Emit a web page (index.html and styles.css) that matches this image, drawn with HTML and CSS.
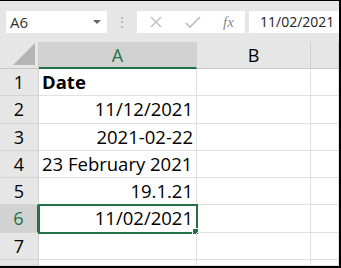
FILE: index.html
```html
<!DOCTYPE html>
<html lang="en">

<head>
    <meta charset="UTF-8">
    <title>Excel dates</title>
    <link rel="stylesheet" href="styles.css">
</head>

<body>
    <div class="window">
        <div class="formula-bar">
            <div class="name-box">
                <span>A6</span>
                <span class="caret"></span>
            </div>
            <div class="grip">&#8942;</div>
            <div class="fx-box">
                <svg class="fx-icon" width="14" height="14" viewBox="0 0 14 14">
                    <path d="M2 2 L12 12 M12 2 L2 12" stroke="#bcbcbc" stroke-width="1.3" fill="none" />
                </svg>
                <svg class="fx-icon" width="16" height="14" viewBox="0 0 16 14">
                    <path d="M1 8 L5 12 L15 2" stroke="#bcbcbc" stroke-width="1.6" fill="none" />
                </svg>
                <span class="fx">fx</span>
            </div>
            <div class="value-box">11/02/2021</div>
        </div>

        <div class="sheet">
            <div class="corner"><span class="tri"></span></div>
            <div class="col-head active">A</div>
            <div class="col-head">B</div>
            <div class="col-head"></div>

            <div class="row-head">1</div>
            <div class="cell bold">Date</div>
            <div class="cell"></div>
            <div class="cell"></div>

            <div class="row-head">2</div>
            <div class="cell right">11/12/2021</div>
            <div class="cell"></div>
            <div class="cell"></div>

            <div class="row-head">3</div>
            <div class="cell right">2021-02-22</div>
            <div class="cell"></div>
            <div class="cell"></div>

            <div class="row-head">4</div>
            <div class="cell">23 February 2021</div>
            <div class="cell"></div>
            <div class="cell"></div>

            <div class="row-head">5</div>
            <div class="cell right">19.1.21</div>
            <div class="cell"></div>
            <div class="cell"></div>

            <div class="row-head active">6</div>
            <div class="cell right selected">11/02/2021<span class="handle"></span></div>
            <div class="cell"></div>
            <div class="cell"></div>

            <div class="row-head">7</div>
            <div class="cell"></div>
            <div class="cell"></div>
            <div class="cell"></div>

            <div class="row-head"></div>
            <div class="cell"></div>
            <div class="cell"></div>
            <div class="cell"></div>
        </div>
    </div>
</body>

</html>
```

FILE: styles.css
```css
body {
    margin: 0;
    font-family: "Open Sans", sans-serif;
}

.window {
    width: 339px;
    height: 265px;
    border-top: 1px solid #000;
    border-right: 2px solid #000;
    border-bottom: 2px solid #000;
    background-color: #e6e6e6;
    overflow: hidden;
    display: flex;
    flex-direction: column;
}

.formula-bar {
    height: 41px;
    display: flex;
    align-items: flex-start;
    padding-top: 10px;
    box-sizing: border-box;
}

.name-box {
    margin-left: 6px;
    width: 101px;
    height: 22px;
    background-color: #fff;
    display: flex;
    align-items: center;
    justify-content: space-between;
    padding: 0 6px 0 4px;
    box-sizing: border-box;
    font-size: 15px;
    color: #333;
}

.caret {
    width: 0;
    height: 0;
    border-left: 4px solid transparent;
    border-right: 4px solid transparent;
    border-top: 4px solid #666;
}

.grip {
    width: 30px;
    text-align: center;
    color: #b0b0b0;
    font-size: 14px;
    line-height: 22px;
}

.fx-box {
    width: 108px;
    height: 22px;
    background-color: #fff;
    display: flex;
    align-items: center;
    padding-left: 12px;
    gap: 22px;
    box-sizing: border-box;
}

.fx {
    font-family: "Liberation Serif", serif;
    font-style: italic;
    color: #8a8a8a;
    font-size: 15px;
}

.value-box {
    margin-left: 4px;
    flex: 1;
    height: 22px;
    background-color: #fff;
    padding-left: 11px;
    font-size: 14px;
    line-height: 22px;
    color: #222;
}

.sheet {
    flex: 1;
    display: grid;
    grid-template-columns: 39px 158px 114px 1fr;
    grid-template-rows: 27px repeat(7, 27.3px) 1fr;
    background-color: #fff;
}

.corner {
    background-color: #e6e6e6;
    border-right: 1px solid #d0d0d0;
    border-bottom: 1px solid #c8c8c8;
    position: relative;
}

.tri {
    position: absolute;
    right: 3px;
    bottom: 3px;
    width: 0;
    height: 0;
    border-left: 22px solid transparent;
    border-bottom: 22px solid #b4b4b4;
}

.col-head {
    background-color: #e6e6e6;
    border-right: 1px solid #d0d0d0;
    border-bottom: 1px solid #c8c8c8;
    text-align: center;
    font-size: 18px;
    line-height: 27px;
    color: #000;
}

.col-head.active {
    background-color: #d2d2d2;
    color: #217346;
    border-bottom: 2px solid #217346;
}

.row-head {
    background-color: #e6e6e6;
    border-right: 1px solid #d0d0d0;
    border-bottom: 1px solid #d4d4d4;
    text-align: center;
    font-size: 18px;
    line-height: 26px;
    color: #000;
}

.row-head.active {
    background-color: #d2d2d2;
    color: #217346;
    border-right: 2px solid #217346;
}

.cell {
    border-right: 1px solid #e1e1e1;
    border-bottom: 1px solid #e1e1e1;
    font-size: 18.5px;
    line-height: 26px;
    padding: 0 3px;
    white-space: nowrap;
    color: #000;
    position: relative;
}

.cell.bold {
    font-weight: bold;
}

.cell.right {
    text-align: right;
}

.cell.selected {
    outline: 2px solid #217346;
    outline-offset: -1px;
}

.handle {
    position: absolute;
    right: -3px;
    bottom: -3px;
    width: 5px;
    height: 5px;
    background-color: #217346;
    border: 1px solid #fff;
}
```
